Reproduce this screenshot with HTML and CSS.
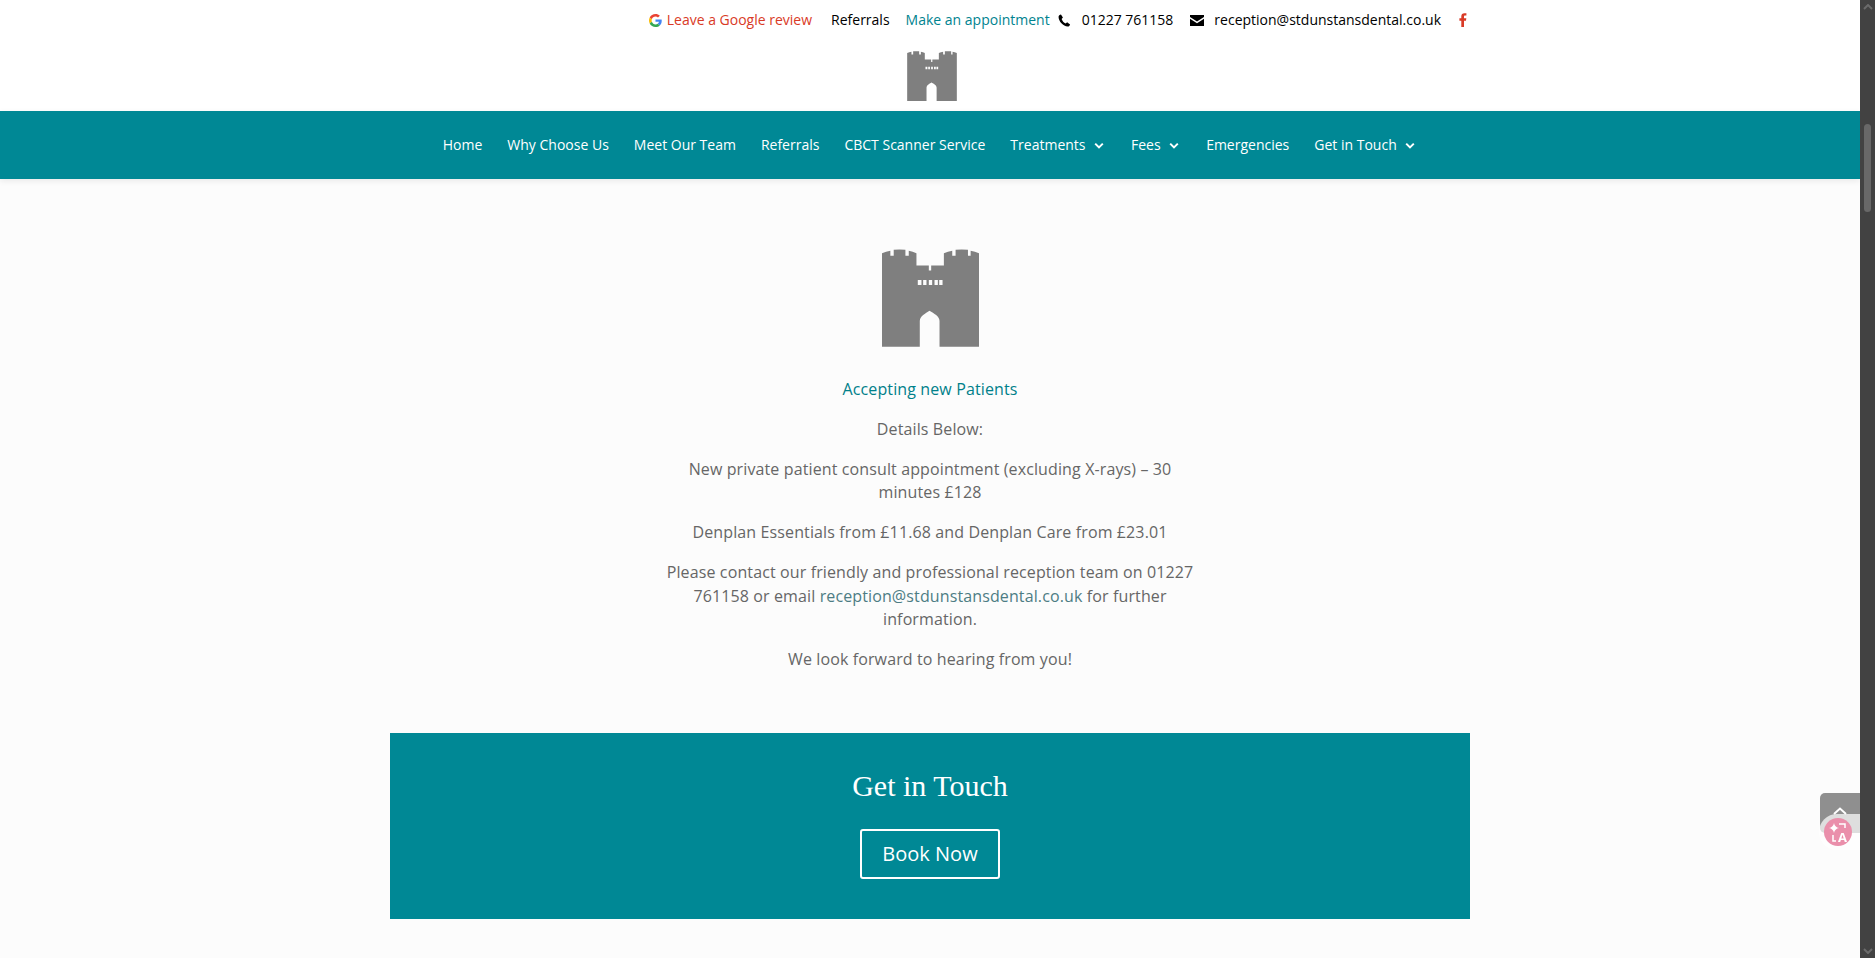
FILE: index.html
```html
<!DOCTYPE html>
<html lang="en">
<head>
    <meta charset="UTF-8">
    <meta name="viewport" content="width=device-width, initial-scale=1.0">
    <title>St Dunstans Dental</title>
    <link rel="stylesheet" href="styles.css">
</head>
<body>
    <svg class="defs" width="0" height="0">
        <symbol id="castle" viewBox="0 0 290 292">
            <path fill-rule="evenodd" d="M0 12 Q12 7 25 5 V20 H35 V2 Q52 0 70 2 V20 H80 V5 Q92 7 103 12 V49 H140 V64 H147 V49 H185 V12 Q197 7 210 5 V20 H220 V2 Q238 0 257 2 V20 H265 V5 Q278 7 290 12 V292 H172 V215 C172 200 155 192 142 184 C130 192 113 200 113 215 V292 H0 Z
            M107 92 V107 H118 V92 Z M123 92 V107 H133 V92 Z M140 92 V107 H150 V92 Z M157 92 V107 H167 V92 Z M171 92 V107 H181 V92 Z"/>
        </symbol>
        <symbol id="chevron" viewBox="0 0 10 8">
            <path d="M1.2 1.6 5 5.4 8.8 1.6" fill="none" stroke="currentColor" stroke-width="2"/>
        </symbol>
    </svg>

    <header class="site-header">
        <div class="top-bar">
            <a class="top-link review" href="#">
                <svg class="g-icon" viewBox="0 0 48 48" width="13" height="13">
                    <path fill="#ea4335" d="M24 9.500c3.500 0 6.700 1.200 9.200 3.600l6.900-6.900C35.900 2.400 30.500 0 24 0 14.600 0 6.500 5.400 2.600 13.200l8 6.200C12.500 13.600 17.800 9.500 24 9.500z"/>
                    <path fill="#4285f4" d="M47 24.500c0-1.600-.1-3.100-.4-4.500H24v9h13c-.6 3-2.200 5.500-4.800 7.200l7.700 6C44.400 37.900 47 31.800 47 24.500z"/>
                    <path fill="#fbbc05" d="M10.600 28.600c-.5-1.500-.8-3-.8-4.600s.3-3.100.8-4.600l-8-6.200C.9 16.500 0 20.100 0 24s.9 7.500 2.600 10.800l8-6.200z"/>
                    <path fill="#34a853" d="M24 48c6.500 0 11.900-2.100 15.900-5.800l-7.700-6c-2.200 1.400-4.900 2.300-8.200 2.300-6.200 0-11.500-4.100-13.400-9.900l-8 6.200C6.500 42.600 14.600 48 24 48z"/>
                </svg>
                Leave a Google review
            </a>
            <a class="top-link referrals" href="#">Referrals</a>
            <a class="top-link appointment" href="#">Make an appointment</a>
            <span class="top-link phone">
                <svg viewBox="0 0 14 14" width="13" height="13"><path d="M3.200.6 5.300 3.800 3.900 5.300C4.500 7.200 6.200 9.300 8.300 10.300L9.800 9 13 11.300C12.700 12.500 11.700 13.500 10.500 13.500 5.500 13.200.8 8 .6 3.200.6 2 1.900.8 3.200.6Z"/></svg>
                01227 761158
            </span>
            <a class="top-link mail" href="#">
                <svg viewBox="0 0 14 11" width="14" height="11"><path d="M0 0H14V2L7 6.500 0 2ZM0 3.800 7 8.300 14 3.800V11H0Z"/></svg>
                reception@stdunstansdental.co.uk
            </a>
            <a class="top-link facebook" href="#">
                <svg viewBox="0 0 8 14" width="8" height="14"><path d="M2.300 14V7.700H.4V5.300H2.300V3.500C2.300 1.300 3.500.2 5.400.2H7.400V2.600H6.100C5.300 2.600 5 3 5 3.700V5.300H7.300L7 7.700H5V14Z"/></svg>
            </a>
        </div>
        <div class="logo-row">
            <svg class="logo-small"><use href="#castle"/></svg>
        </div>
    </header>

    <nav class="main-nav">
        <a href="#">Home</a>
        <a href="#">Why Choose Us</a>
        <a href="#">Meet Our Team</a>
        <a href="#">Referrals</a>
        <a href="#">CBCT Scanner Service</a>
        <a href="#">Treatments <svg class="caret"><use href="#chevron"/></svg></a>
        <a href="#">Fees <svg class="caret"><use href="#chevron"/></svg></a>
        <a href="#">Emergencies</a>
        <a href="#">Get in Touch <svg class="caret"><use href="#chevron"/></svg></a>
    </nav>

    <main class="content">
        <svg class="logo-large"><use href="#castle"/></svg>
        <div class="intro">
            <p class="accepting">Accepting new Patients</p>
            <p>Details Below:</p>
            <p>New private patient consult appointment (excluding X-rays) – 30 minutes £128</p>
            <p>Denplan Essentials from £11.68 and Denplan Care from £23.01</p>
            <p>Please contact our friendly and professional reception team on 01227 761158 or email <a href="#">reception@stdunstansdental.co.uk</a> for further information.</p>
            <p>We look forward to hearing from you!</p>
        </div>
        <section class="cta">
            <h2>Get in Touch</h2>
            <a class="book-btn" href="#">Book Now</a>
        </section>
    </main>

    <!-- floating bits on the right edge -->
    <a class="back-top" href="#">
        <svg viewBox="0 0 14 8" width="14" height="8"><path d="M1 7 7 1.500 13 7" fill="none" stroke="#fff" stroke-width="2"/></svg>
    </a>
    <div class="translate-pill">
        <span class="translate-dot">
            <svg viewBox="0 0 28 28" width="28" height="28">
                <path fill="#fff" d="M10 5 Q10.800 9.200 15 10 Q10.800 10.800 10 15 Q9.200 10.800 5 10 Q9.200 9.200 10 5Z"/>
                <path d="M15 6H21V10M9 17V23H12" fill="none" stroke="#fff" stroke-width="1.500"/>
                <text x="14" y="24" class="translate-a">A</text>
            </svg>
        </span>
    </div>

    <div class="scrollbar">
        <svg class="scroll-arrow" viewBox="0 0 10 6"><path d="M1 5 5 1 9 5" fill="none" stroke="#6b6b6b" stroke-width="2"/></svg>
        <div class="scroll-track"><div class="scroll-thumb"></div></div>
        <svg class="scroll-arrow" viewBox="0 0 10 6"><path d="M1 1 5 5 9 1" fill="none" stroke="#6b6b6b" stroke-width="2"/></svg>
    </div>
</body>
</html>
```

FILE: styles.css
```css
* { box-sizing: border-box; }
html, body { height: 100%; }
body {
    margin: 0;
    padding-right: 15px;
    overflow: hidden;
    background: #fcfcfc;
    color: #666;
    font-family: "Open Sans", sans-serif;
    font-size: 16px;
    line-height: 23.75px;
}
a { text-decoration: none; color: inherit; }
.defs { position: absolute; }

.site-header { background: #fff; height: 111px; }
.top-bar {
    display: flex;
    justify-content: flex-end;
    align-items: center;
    height: 40px;
    padding-right: 393px;
    font-size: 14px;
    color: #000;
}
.top-link { display: flex; align-items: center; white-space: nowrap; }
.top-link svg { fill: currentColor; }
.review { color: #d93a26; gap: 5px; margin-right: 19px; }
.referrals { margin-right: 16px; }
.appointment { color: #00838f; margin-right: 8px; }
.phone { gap: 11px; margin-right: 17px; }
.mail { gap: 10px; margin-right: 18px; }
.facebook { color: #d93a26; }
.logo-row { display: flex; justify-content: center; padding: 11px 0 0 4px; }
.logo-small { width: 50px; height: 50px; fill: #7f7f7f; }

.main-nav {
    display: flex;
    justify-content: center;
    align-items: center;
    gap: 25px;
    height: 68px;
    background: #008895;
    color: #fff;
    font-size: 14px;
    font-weight: 500;
    box-shadow: 0 2px 6px rgba(0,0,0,0.08);
    position: relative;
}
.main-nav a { display: flex; align-items: center; gap: 8px; }
.caret { width: 10px; height: 8px; margin: 2px 2.5px 0 0; }

.content { display: flex; flex-direction: column; align-items: center; padding-top: 70px; }
.logo-large { width: 97px; height: 98px; fill: #7f7f7f; }
.intro { width: 540px; margin-top: 31px; text-align: center; letter-spacing: 0.12px; }
.intro p { margin: 0 0 16px; }
.intro p:last-child { margin-bottom: 0; }
.intro a { color: #4d7c84; }
.accepting { color: #00808a; }

.cta {
    width: 1080px;
    height: 186px;
    margin-top: 61px;
    padding-top: 34px;
    background: #008895;
    color: #fff;
    text-align: center;
}
.cta h2 {
    margin: 0 0 24px;
    font-family: "Liberation Serif", serif;
    font-size: 30px;
    font-weight: 400;
    line-height: 38px;
}
.book-btn {
    display: inline-block;
    width: 140px;
    height: 50px;
    border: 2px solid #fff;
    border-radius: 3px;
    font-size: 20px;
    font-weight: 500;
    line-height: 46px;
}

.back-top {
    position: fixed;
    left: 1820px;
    top: 793px;
    width: 40px;
    height: 40px;
    display: flex;
    justify-content: center;
    padding-top: 14px;
    background: #8f8f8f;
    border-radius: 5px 0 0 5px;
}
.translate-pill {
    position: fixed;
    left: 1819px;
    top: 814px;
    width: 41px;
    height: 36px;
    padding: 4px 0 0 5px;
    background: rgba(255,255,255,0.7);
    border-radius: 18px 0 0 18px;
}
.translate-dot {
    display: block;
    width: 28px;
    height: 28px;
    border-radius: 50%;
    background: #ea8fab;
}
.translate-a { fill: #fff; font-family: "Open Sans", sans-serif; font-size: 13px; font-weight: 700; }

.scrollbar {
    position: fixed;
    top: 0;
    right: 0;
    bottom: 0;
    width: 15px;
    display: flex;
    flex-direction: column;
    align-items: center;
    background: #424242;
}
.scroll-arrow { width: 10px; height: 6px; margin: 4px 0; flex: none; }
.scroll-track { flex: 1; width: 100%; padding: 110px 4px 0; }
.scroll-thumb { height: 88px; border-radius: 4px; background: #686868; }
```
